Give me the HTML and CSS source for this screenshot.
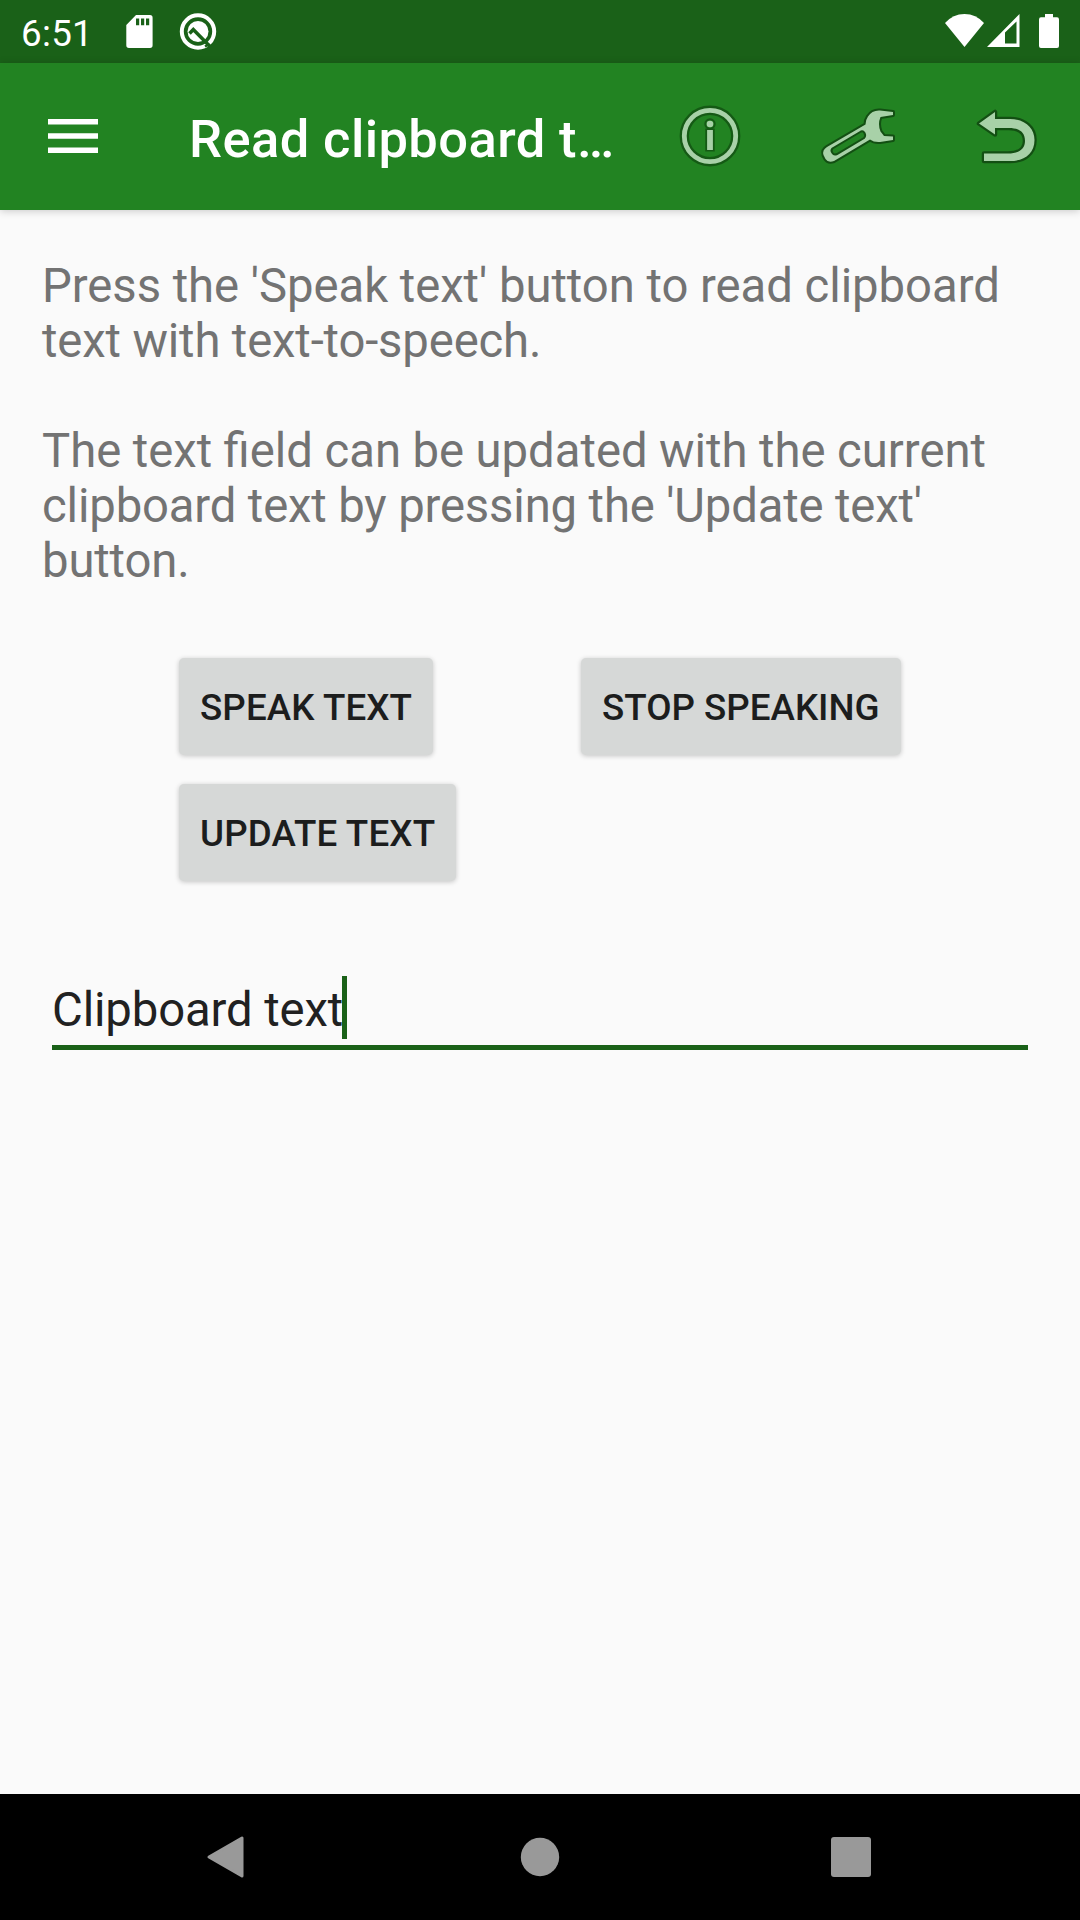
FILE: index.html
```html
<!DOCTYPE html>
<html lang="en">
<head>
<meta charset="utf-8">
<title>Read clipboard text</title>
<link rel="stylesheet" href="styles.css">
</head>
<body>
<div class="screen">
  <div class="status-bar">
    <span class="clock">6:51</span>
    <svg class="sd-card" width="27" height="33" viewBox="0 0 27 33"><path fill="#fff" fill-rule="evenodd" d="M10 0H24Q26.600 0 26.600 2.700V30.300Q26.600 33 24 33H3Q0.300 33 0.300 30.300V10ZM10 3.500V10.300H13.200V3.500ZM15 3.500V10.300H18.200V3.500ZM20 3.500V10.300H23.200V3.500Z"/></svg>
    <svg class="q-badge" width="38" height="38" viewBox="0 0 38 38"><circle cx="19" cy="18.500" r="16.200" fill="none" stroke="#fff" stroke-width="4"/><circle cx="19" cy="18.500" r="10.500" fill="#fff"/><path d="M10.500 20.500L14.300 16.500L31 33.500" fill="none" stroke="#1a6118" stroke-width="3.500"/><path d="M26 33.500L30.500 31" stroke="#1a6118" stroke-width="2.500"/></svg>
    <div class="signals">
      <svg width="39" height="33" viewBox="0 0 39 33"><path fill="#fff" d="M0 9Q8 0 19.500 0T39 9L19.500 33Z"/></svg>
      <svg class="cell" width="33" height="33" viewBox="0 0 33 33"><path fill="#fff" fill-rule="evenodd" d="M0 33L32.500 0V33ZM18 18.500V29.500H29.500V7.500Z"/></svg>
      <svg class="battery" width="20" height="34" viewBox="0 0 20 34"><path fill="#fff" d="M6 0H14V3.300H18Q20 3.300 20 5.500V32Q20 34 18 34H2Q0 34 0 32V5.500Q0 3.300 2 3.300H6Z"/></svg>
    </div>
  </div>
  <div class="toolbar">
    <svg class="menu" width="50" height="35" viewBox="0 0 50 35"><path fill="#fff" d="M0 0H50V5.500H0ZM0 14.200H50V19.700H0ZM0 28.500H50V34H0Z"/></svg>
    <h1 class="title">Read clipboard t…</h1>
    <div class="actions">
      <svg width="100" height="95" viewBox="0 0 100 95"><g fill="none" stroke="#155a15"><circle cx="50" cy="46" r="25.700" stroke-width="9.400"/><circle cx="50" cy="34" r="4.700" stroke-width="2"/><path d="M50 38.500V61.500" stroke-width="9.500"/></g><circle cx="50" cy="46" r="25.700" fill="none" stroke="#a8d1a8" stroke-width="4.800"/><circle cx="50" cy="34" r="3.300" fill="#a8d1a8"/><path d="M50 40V60" stroke="#a8d1a8" stroke-width="5.800"/></svg>
      <svg width="100" height="95" viewBox="0 0 100 95"><path d="M83 22L70 20.500Q62 20 58 26.500Q55.500 30 55.500 34.500L17 57Q12 60 13.500 65L15.500 69Q18 73 24 71L60 49.500Q64 52.500 70 52L83 50V46.500L74 46L70.500 41.500Q67.500 34 70.500 27L83 25Z" fill="#a8d1a8" stroke="#134f13" stroke-width="4" stroke-linejoin="round" paint-order="stroke"/><path d="M51 41.500L22.500 58.500Q20.500 60.500 22.500 63Q24 65.500 27 64L54 48Q56 46 54.500 43Q53 40.500 51 41.500Z" fill="#228322" stroke="#134f13" stroke-width="2"/></svg>
      <svg width="100" height="95" viewBox="0 0 100 95"><path d="M19 33.500L35 22V29H50C65 29 74.500 38 74.500 50C74.500 64 64 71 50 71H24V63.500H48C59 63.500 65 59 65 51C65 42 59 38 49 38H35V44.500Z" fill="#a8d1a8" stroke="#134f13" stroke-width="4.500" stroke-linejoin="round" paint-order="stroke"/></svg>
    </div>
  </div>
  <main class="content">
    <p class="help"><span class="snug">Press the 'Speak text' button to read clipboard</span><br><span class="tight">text with text-to-speech.</span></p>
    <p class="help"><span class="words">The text field can be updated with the current</span><br><span class="tight">clipboard text by pressing the 'Update text'</span><br><span class="tight">button.</span></p>
    <div class="buttons">
      <button class="btn loose">SPEAK TEXT</button>
      <button class="btn">STOP SPEAKING</button>
      <button class="btn looser">UPDATE TEXT</button>
    </div>
    <div class="field"><span class="value">Clipboard text</span><i class="caret"></i></div>
  </main>
  <div class="nav-bar">
    <svg width="40" height="44" viewBox="0 0 40 44"><path d="M3 22L36 3V41Z" fill="#999" stroke="#999" stroke-width="3" stroke-linejoin="round"/></svg>
    <svg width="40" height="40" viewBox="0 0 40 40"><circle cx="20" cy="20" r="19.200" fill="#999"/></svg>
    <svg width="40" height="40" viewBox="0 0 40 40"><rect width="40" height="40" rx="3" fill="#999"/></svg>
  </div>
</div>
</body>
</html>
```
FILE: styles.css
```css
* { box-sizing: border-box; }
body { margin: 0; font-family: Roboto, sans-serif; }
.screen { width: 1080px; height: 1920px; display: flex; flex-direction: column; background: #fafafa; }
svg { display: block; flex: none; }

.status-bar { height: 63px; flex: none; display: flex; align-items: flex-start; background: #1a6118; padding: 0 21px; }
.clock { width: 105px; color: #fff; font-size: 36.75px; line-height: 43px; margin-top: 12px; letter-spacing: .3px; }
.sd-card { margin-top: 15px; }
.q-badge { margin: 13px 0 0 26px; }
.signals { display: flex; margin: 14px 0 0 auto; }
.cell { margin-left: 3px; }
.battery { margin-left: 19px; }

.toolbar { height: 147px; flex: none; display: flex; align-items: center; background: #228322; padding-left: 48px; box-shadow: 0 1px 8px rgba(0, 0, 0, .2); }
.menu { margin-bottom: 1px; }
.title { margin: 5px 0 0 91px; color: #fff; font-size: 52.5px; font-weight: 500; line-height: 62px; letter-spacing: .4px; white-space: nowrap; }
.actions { margin: 1px 0 0 auto; padding-right: 20px; display: flex; gap: 50px; }

.content { flex: 1; padding: 49px 42px 0; }
.help { margin: 0 0 55px; color: #737373; font-size: 47.25px; line-height: 55px; white-space: nowrap; }
.snug { letter-spacing: -.04px; }
.tight { letter-spacing: -.15px; }
.words { word-spacing: -.25px; }

.buttons { display: grid; grid-template-columns: 402px 402px; justify-items: start; row-gap: 29px; margin: 69px 0 0 137px; }
.btn { height: 97px; padding: 1px 21px 0; border: 0; border-radius: 5px; background: #d6d8d7; color: #1c1d1d; font: 500 36.75px/43px Roboto, sans-serif; white-space: nowrap; box-shadow: 0 1px 5px rgba(0, 0, 0, .22); }
.loose { letter-spacing: .1px; }
.looser { letter-spacing: .17px; }

.field { display: flex; align-items: center; height: 74px; margin: 95px 10px 0; padding-bottom: 6px; border-bottom: 5px solid #1a6118; color: #212121; font-size: 47.25px; line-height: 55px; white-space: nowrap; }
.value { padding-top: 6px; letter-spacing: -.12px; }
.caret { width: 5px; height: 63px; margin-left: -1.3px; background: #1a6118; }

.nav-bar { height: 126px; flex: none; display: flex; align-items: center; justify-content: space-between; padding: 0 209px 0 206px; background: #000; }
.nav-bar svg:nth-child(2) { margin-left: 3px; }
```
